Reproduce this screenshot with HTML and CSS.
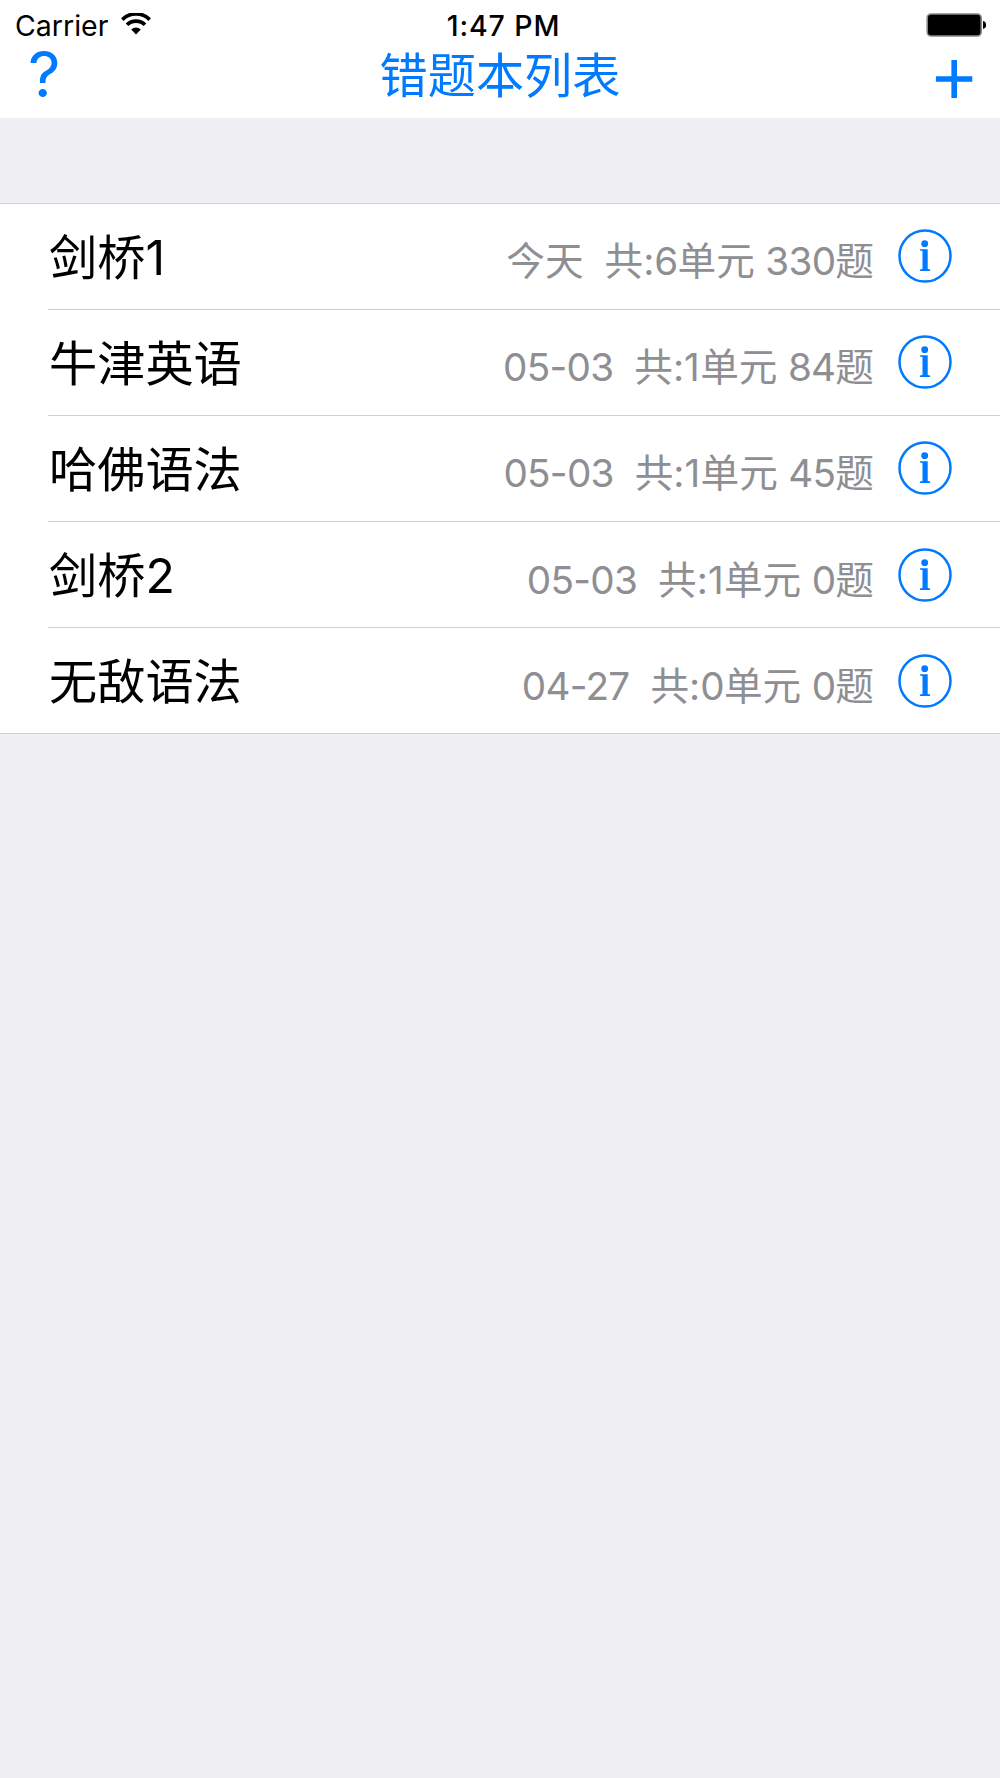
FILE: index.html
```
<!DOCTYPE html>
<html lang="zh-CN">
<head>
  <meta charset="UTF-8">
  <meta name="viewport" content="width=device-width, initial-scale=1.0">
  <title>错题本列表</title>
  <link rel="stylesheet" href="styles.css">
</head>
<body>
  <svg width="0" height="0" class="defs">
    <symbol id="icon-info" viewBox="0 0 54 54">
      <circle cx="27" cy="27" r="25.5" fill="none" stroke="currentColor" stroke-width="2.5"/>
      <circle cx="26.7" cy="14.7" r="3.4" fill="currentColor"/>
      <path d="M22 20.2h7.7v19.8l2.4.5v1.4H21.9v-1.4l2.6-.5V22l-2.5-.4z" fill="currentColor"/>
    </symbol>
  </svg>

  <header class="header">
    <div class="status-bar">
      <div class="status-left">
        <span class="carrier">Carrier</span>
        <svg class="wifi" width="30" height="22" viewBox="0 0 30 22">
          <path d="M1.3 6.6a19.4 19.4 0 0 1 27.4 0" fill="none" stroke="#000" stroke-width="3.8"/>
          <path d="M6 11.8a12.8 12.8 0 0 1 18 0" fill="none" stroke="#000" stroke-width="3.6"/>
          <path d="M10.2 16.4a6.9 6.9 0 0 1 9.6 0L15 21.4z"/>
        </svg>
      </div>
      <span class="time">1:47 PM</span>
      <div class="status-right">
        <svg width="60" height="24" viewBox="0 0 60 24">
          <rect x="1.2" y="1" width="54" height="22" rx="4" fill="#000" stroke="#888" stroke-width="1.6"/>
          <path d="M57 8c4.4 1 4.4 7 0 8z"/>
        </svg>
      </div>
    </div>
    <div class="nav-bar">
      <a class="nav-help" href="#">?</a>
      <h1 class="nav-title">错题本列表</h1>
      <a class="nav-add" href="#">
        <svg width="38" height="38" viewBox="0 0 38 38">
          <path d="M0.9 19h36.4M19.2 0v38" stroke="currentColor" stroke-width="5.6"/>
        </svg>
      </a>
    </div>
  </header>

  <ul class="book-list">
    <li class="book">
      <span class="name">剑桥1</span>
      <span class="detail">今天&nbsp; 共:<span class="num">6</span>单元 <span class="num">330</span>题</span>
      <svg class="info"><use href="#icon-info"/></svg>
    </li>
    <li class="book">
      <span class="name">牛津英语</span>
      <span class="detail"><span class="num">05-03</span>&nbsp; 共:<span class="one">1</span>单元 <span class="num">84</span>题</span>
      <svg class="info"><use href="#icon-info"/></svg>
    </li>
    <li class="book">
      <span class="name">哈佛语法</span>
      <span class="detail"><span class="num">05-03</span>&nbsp; 共:<span class="one">1</span>单元 <span class="num">45</span>题</span>
      <svg class="info"><use href="#icon-info"/></svg>
    </li>
    <li class="book">
      <span class="name">剑桥2</span>
      <span class="detail"><span class="num">05-03</span>&nbsp; 共:<span class="one">1</span>单元 <span class="num">0</span>题</span>
      <svg class="info"><use href="#icon-info"/></svg>
    </li>
    <li class="book">
      <span class="name">无敌语法</span>
      <span class="detail"><span class="num">04-27</span>&nbsp; 共:<span class="num">0</span>单元 <span class="num">0</span>题</span>
      <svg class="info"><use href="#icon-info"/></svg>
    </li>
  </ul>
</body>
</html>
```
FILE: styles.css
```
:root {
  --tint: #007aff;
  --bg: #efeff4;
  --line: #d0d0d4;
  --gray: #8e8e93;
}
* {
  box-sizing: border-box;
}
body {
  margin: 0;
  min-height: 100vh;
  background: var(--bg);
  color: #000;
  font-family: Inter, "Noto Sans CJK SC", sans-serif;
}
a {
  color: var(--tint);
  text-decoration: none;
}
.defs {
  display: block;
}
.header {
  height: 118px;
  background: #fff;
}
.status-bar {
  display: grid;
  grid-template-columns: 1fr auto 1fr;
  align-items: center;
  height: 48px;
  padding: 3px 14px 0 15px;
  font-size: 28.5px;
  line-height: 45px;
}
.status-left {
  display: flex;
  align-items: center;
}
.wifi {
  margin: 0 0 3px 13px;
}
.time {
  margin-left: 6px;
  font-weight: 500;
  letter-spacing: 0.9px;
}
.status-right {
  display: flex;
  justify-content: flex-end;
  padding-bottom: 2px;
}
.nav-bar {
  display: grid;
  grid-template-columns: 1fr auto 1fr;
  align-items: center;
  height: 56px;
  padding: 0 27px;
}
.nav-help {
  padding: 0 0 4px 1px;
  font-size: 63.5px;
  line-height: 52px;
}
.nav-title {
  margin: 0;
  color: var(--tint);
  font-size: 48.2px;
  font-weight: 400;
  line-height: 56px;
}
.nav-add {
  display: flex;
  justify-content: flex-end;
  padding-top: 6px;
}
.book-list {
  margin: 85px 0 0;
  padding: 0;
  list-style: none;
  background: #fff;
  border-top: 1px solid var(--line);
  border-bottom: 1px solid var(--line);
}
.book {
  display: flex;
  align-items: center;
  height: 106.2px;
  margin-left: 48px;
  padding-right: 48px;
}
.book:first-child {
  height: 104.6px;
}
.book + .book {
  border-top: 1px solid var(--line);
}
.name {
  flex: 1;
  padding: 3px 0 0 1px;
  font-size: 48.2px;
  line-height: 70px;
}
.detail {
  padding-top: 10px;
  color: var(--gray);
  font-size: 38.65px;
  line-height: 56px;
  word-spacing: -0.4px;
}
.num {
  letter-spacing: -0.7px;
}
.one {
  letter-spacing: 0.3px;
}
.info {
  width: 54px;
  height: 54px;
  margin-left: 24px;
  color: var(--tint);
}
```
